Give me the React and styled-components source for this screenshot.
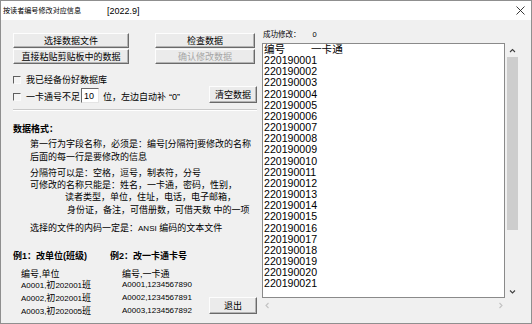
import styled, { createGlobalStyle } from "styled-components";

const FONT = `"Liberation Sans", "Noto Sans CJK SC", sans-serif`;

const GlobalStyle = createGlobalStyle`
  body {
    margin: 0;
    background: #ffffff;
  }
  * {
    box-sizing: border-box;
  }
`;

// window frame
const Window = styled.div`
  width: 532px;
  height: 324px;
  display: flex;
  flex-direction: column;
  background: #f0f0f0;
  border: 1px solid #8f8f8f;
  font-family: ${FONT};
  color: #000;
  overflow: hidden;
`;

const TitleBar = styled.div`
  height: 19px;
  flex: none;
  display: flex;
  align-items: center;
  padding: 0 6px 0 2px;
  background: #ffffff;
`;

const TitleText = styled.span`
  font-size: 7.1px;
  line-height: 10px;
`;

const TitleTag = styled.span`
  font-size: 9px;
  line-height: 10px;
  margin-left: 26px;
`;

const CloseButton = styled.div`
  margin-left: auto;
  display: flex;
  align-items: center;
`;

const Body = styled.div`
  flex: 1;
  display: flex;
  gap: 5px;
  padding: 0 11px 0 12px;
`;

const LeftPane = styled.div`
  width: 244px;
  display: flex;
  flex-direction: column;
`;

const RightPane = styled.div`
  width: 258px;
  display: flex;
  flex-direction: column;
`;

// buttons
const ButtonRow = styled.div`
  margin-top: 13px;
  display: flex;
  gap: 26px;
`;

const ButtonStack = styled.div`
  width: ${(p) => p.$width}px;
  display: flex;
  flex-direction: column;
  gap: 1px;
`;

const Button = styled.div`
  width: ${(p) => (p.$width ? `${p.$width}px` : "100%")};
  height: ${(p) => p.$height || 15}px;
  display: flex;
  align-items: center;
  justify-content: center;
  font-size: 9px;
  line-height: 10px;
  color: ${(p) => (p.$disabled ? "#a6a6a6" : "#000")};
  background: #ebebeb;
  border-top: 1px solid #fdfdfd;
  border-left: 1px solid #fdfdfd;
  border-right: 1px solid #6a6a6a;
  border-bottom: 1px solid #6a6a6a;
  box-shadow: inset -1px -1px 0 #b4b4b4;
`;

const ButtonSlot = styled.div`
  margin-left: auto;
  margin-bottom: ${(p) => p.$bottom || 0}px;
`;

// options
const CheckRow = styled.div`
  margin-top: ${(p) => p.$top || 0}px;
  height: ${(p) => p.$height}px;
  display: flex;
  align-items: center;
  font-size: 9px;
  line-height: 12px;
`;

const OptionGroup = styled.div`
  display: flex;
  align-items: center;
  margin-top: ${(p) => p.$shift || 0}px;
`;

const CheckBox = styled.span`
  width: 8px;
  height: 8px;
  margin-right: 5px;
  flex: none;
  border-top: 1px solid #5f5f5f;
  border-left: 1px solid #5f5f5f;
  border-right: 1px solid #fafafa;
  border-bottom: 1px solid #fafafa;
  background: #f4f4f4;
`;

const NumberBox = styled.span`
  width: 18px;
  height: 15px;
  margin: -3px 4px 0 1px;
  padding: 1px 0 0 2px;
  font-size: 9px;
  line-height: 12px;
  background: #fff;
  border-top: 1px solid #6a6a6a;
  border-left: 1px solid #6a6a6a;
  border-right: 1px solid #e4e4e4;
  border-bottom: 1px solid #e4e4e4;
`;

const Quote = styled.span`
  margin-left: 3px;
`;

// group with help text
const Group = styled.div`
  margin-top: 6px;
  flex: 1;
  display: flex;
  flex-direction: column;
  border-top: 1px solid #c9c9c9;
  box-shadow: inset 0 1px 0 #ffffff;
`;

const Heading = styled.div`
  height: 12px;
  flex: none;
  margin-top: ${(p) => p.$top || 0}px;
  margin-left: ${(p) => p.$indent || 0}px;
  font-size: 9px;
  line-height: 12px;
  font-weight: 700;
  white-space: nowrap;
`;

const Line = styled.div`
  height: 12px;
  flex: none;
  margin-top: ${(p) => p.$top || 0}px;
  margin-left: ${(p) => p.$indent || 0}px;
  font-size: 9px;
  line-height: 12px;
  white-space: nowrap;
`;

const Small = styled.span`
  font-size: 8px;
  line-height: 12px;
`;

const Examples = styled.div`
  margin-top: 16px;
  display: flex;
  align-items: flex-end;
`;

const ExampleCol = styled.div`
  width: ${(p) => p.$width}px;
  display: flex;
  flex-direction: column;
`;

const ExampleLines = styled.div`
  margin-top: 6px;
  padding-left: ${(p) => p.$indent}px;
  display: flex;
  flex-direction: column;
`;

const ExampleRow = styled.div`
  height: ${(p) => p.$height || 12}px;
  font-size: 8px;
  line-height: 12px;
  white-space: nowrap;
  overflow: visible;
`;

const ExampleCn = styled.span`
  font-size: 9px;
  line-height: 12px;
`;

// right side list
const Status = styled.div`
  margin-top: 9px;
  height: 12px;
  font-size: 7.5px;
  line-height: 12px;
  padding-left: 1px;
`;

const StatusValue = styled.span`
  margin-left: 12px;
`;

const ListBox = styled.div`
  margin-top: 2px;
  height: 270px;
  display: grid;
  grid-template-columns: 1fr 15px;
  grid-template-rows: 1fr 15px;
`;

const ListArea = styled.div`
  background: #ffffff;
  border: 1px solid #8a8a8a;
  padding: 0 0 0 1px;
  overflow: hidden;
  font-size: 10.6px;
  line-height: 11.15px;
  white-space: nowrap;
`;

const ListHead = styled.span`
  display: inline-block;
  width: 47px;
`;

const VScroll = styled.div`
  display: flex;
  flex-direction: column;
  align-items: center;
`;

const ArrowCell = styled.div`
  height: ${(p) => p.$size}px;
  width: ${(p) => p.$size}px;
  margin-top: ${(p) => (p.$end ? "auto" : "0")};
  display: flex;
  align-items: center;
  justify-content: center;
  flex: none;
`;

const Thumb = styled.div`
  width: 11px;
  height: 173px;
  background: #cdcdcd;
`;

const HScroll = styled.div`
  display: flex;
  align-items: center;
  justify-content: space-between;
  padding: 0 1px 0 2px;
`;

function Chevron({ dir, color = "#404040", size = 7 }) {
  const paths = {
    up: "M1 5 L3.5 2.5 L6 5",
    down: "M1 2.5 L3.5 5 L6 2.5",
    left: "M4.5 1 L2 3.5 L4.5 6",
    right: "M2.5 1 L5 3.5 L2.5 6",
  };
  return (
    <svg width={size} height={size} viewBox="0 0 7 7">
      <path d={paths[dir]} fill="none" stroke={color} strokeWidth="1.1" />
    </svg>
  );
}

function CloseIcon() {
  return (
    <svg width="9" height="9" viewBox="0 0 9 9">
      <path d="M0.5 0.5 L8.5 8.5 M8.5 0.5 L0.5 8.5" stroke="#222" strokeWidth="0.9" />
    </svg>
  );
}

const rows = Array.from({ length: 21 }, (_, i) => `2201900${String(i + 1).padStart(2, "0")}`);

export default function App() {
  return (
    <>
      <GlobalStyle />
      <Window>
        <TitleBar>
          <TitleText>按读者编号修改对应信息</TitleText>
          <TitleTag>[2022.9]</TitleTag>
          <CloseButton>
            <CloseIcon />
          </CloseButton>
        </TitleBar>

        <Body>
          <LeftPane>
            <ButtonRow>
              <ButtonStack $width={116}>
                <Button>选择数据文件</Button>
                <Button>直接粘贴剪贴板中的数据</Button>
              </ButtonStack>
              <ButtonStack $width={100}>
                <Button>检查数据</Button>
                <Button $disabled>确认修改数据</Button>
              </ButtonStack>
            </ButtonRow>

            <CheckRow $top={10} $height={12}>
              <CheckBox />
              我已经备份好数据库
            </CheckRow>

            <CheckRow $height={17}>
              <OptionGroup $shift={4}>
                <CheckBox />
                一卡通号不足
                <NumberBox>10</NumberBox>
                位，左边自动补<Quote>“0”</Quote>
              </OptionGroup>
              <ButtonSlot>
                <Button $width={48} $height={17}>清空数据</Button>
              </ButtonSlot>
            </CheckRow>

            <Group>
              <Heading $top={13}>数据格式：</Heading>
              <Line $top={3} $indent={17}>第一行为字段名称，必须是：编号[分隔符]要修改的名称</Line>
              <Line $top={1} $indent={17}>后面的每一行是要修改的信息</Line>
              <Line $top={4} $indent={17}>分隔符可以是：空格，逗号，制表符，分号</Line>
              <Line $indent={17}>可修改的名称只能是：姓名，一卡通，密码，性别，</Line>
              <Line $indent={52}>读者类型，单位，住址，电话，电子邮箱，</Line>
              <Line $top={1} $indent={54}>身份证，备注，可借册数，可借天数 中的一项</Line>
              <Line $top={6} $indent={17}>
                选择的文件的内码一定是：<Small>ANSI</Small> 编码的文本文件
              </Line>

              <Examples>
                <ExampleCol $width={97}>
                  <Heading>例1：改单位(班级)</Heading>
                  <ExampleLines $indent={8}>
                    <ExampleRow $height={11}><ExampleCn>编号,单位</ExampleCn></ExampleRow>
                    <ExampleRow $height={13}>A0001,<ExampleCn>初</ExampleCn>202001<ExampleCn>班</ExampleCn></ExampleRow>
                    <ExampleRow $height={13}>A0002,<ExampleCn>初</ExampleCn>202001<ExampleCn>班</ExampleCn></ExampleRow>
                    <ExampleRow>A0003,<ExampleCn>初</ExampleCn>202005<ExampleCn>班</ExampleCn></ExampleRow>
                  </ExampleLines>
                </ExampleCol>
                <ExampleCol $width={95}>
                  <Heading>例2：改一卡通卡号</Heading>
                  <ExampleLines $indent={12}>
                    <ExampleRow $height={11}><ExampleCn>编号,一卡通</ExampleCn></ExampleRow>
                    <ExampleRow $height={13}>A0001,1234567890</ExampleRow>
                    <ExampleRow $height={13}>A0002,1234567891</ExampleRow>
                    <ExampleRow>A0003,1234567892</ExampleRow>
                  </ExampleLines>
                </ExampleCol>
                <ButtonSlot $bottom={3}>
                  <Button $width={48} $height={17}>退出</Button>
                </ButtonSlot>
              </Examples>
            </Group>
          </LeftPane>

          <RightPane>
            <Status>
              成功修改：<StatusValue>0</StatusValue>
            </Status>
            <ListBox>
              <ListArea>
                <div>
                  <ListHead>编号</ListHead>一卡通
                </div>
                {rows.map((r) => (
                  <div key={r}>{r}</div>
                ))}
              </ListArea>
              <VScroll>
                <ArrowCell $size={14}>
                  <Chevron dir="up" />
                </ArrowCell>
                <Thumb />
                <ArrowCell $size={14} $end>
                  <Chevron dir="down" />
                </ArrowCell>
              </VScroll>
              <HScroll>
                <Chevron dir="left" color="#c2c2c2" />
                <Chevron dir="right" color="#c2c2c2" />
              </HScroll>
              <div />
            </ListBox>
          </RightPane>
        </Body>
      </Window>
    </>
  );
}
